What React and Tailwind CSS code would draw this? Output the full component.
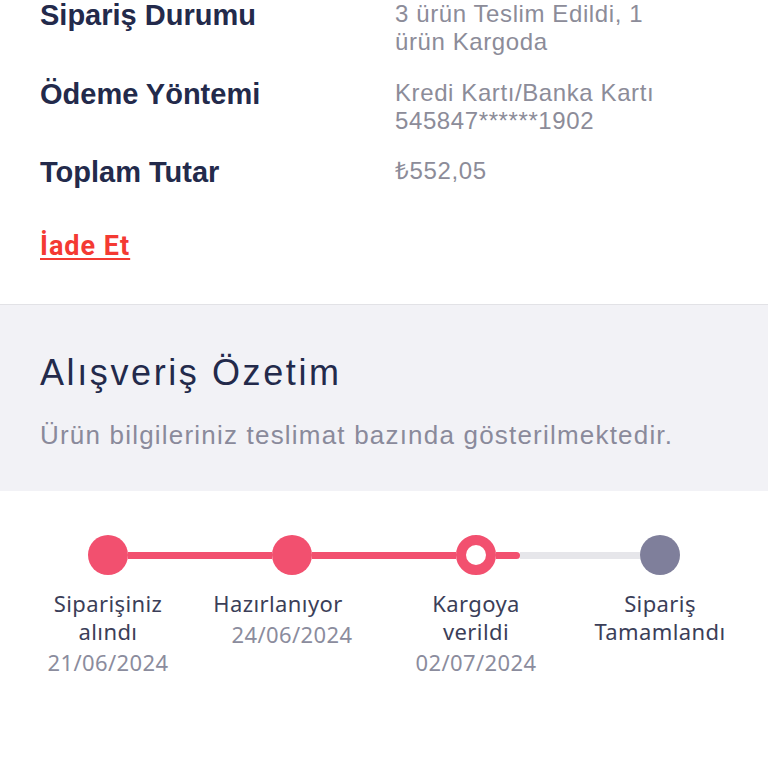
import React from "react";

const steps = [
  { lines: ["Siparişiniz", "alındı"], date: "21/06/2024", state: "done" },
  { lines: ["Hazırlanıyor"], date: "24/06/2024", state: "done", shift: true },
  { lines: ["Kargoya", "verildi"], date: "02/07/2024", state: "current" },
  { lines: ["Sipariş", "Tamamlandı"], date: null, state: "todo" },
];

const InfoRow = ({ label, children }) => (
  <div className="grid grid-cols-[355px_1fr] items-start">
    <div className="text-[29px] leading-[30px] font-bold text-[#232a4b]">{label}</div>
    <div className="text-[24px] leading-[28px] text-[#8c8c99] tracking-[0.6px]">{children}</div>
  </div>
);

const Step = ({ step, idx }) => {
  const leftColor = idx === 0 ? "bg-transparent" : idx === 3 ? "bg-[#e6e6ea]" : "bg-[#f2506f]";
  return (
    <div className="flex flex-col items-center">
      <div className="flex items-center w-full h-10">
        <div className={`flex-1 h-[7px] ${leftColor}`} />
        {step.state === "done" && <div className="w-10 h-10 rounded-full bg-[#f2506f] shrink-0" />}
        {step.state === "current" && (
          <div className="w-10 h-10 rounded-full border-[10px] border-[#f2506f] bg-white shrink-0" />
        )}
        {step.state === "todo" && <div className="w-10 h-10 rounded-full bg-[#7f7f9b] shrink-0" />}
        {idx === 2 ? (
          <div className="flex-1 flex h-[7px]">
            <div className="w-[24px] h-[7px] bg-[#f2506f] rounded-r-full" />
            <div className="flex-1 h-[7px] bg-[#e6e6ea]" />
          </div>
        ) : idx === 3 ? (
          <div className="flex-1 h-[7px]" />
        ) : (
          <div className="flex-1 h-[7px] bg-[#f2506f]" />
        )}
      </div>
      <div className="mt-[14px] flex flex-col items-center font-['Noto_Sans',sans-serif] text-[22px] leading-[28px] tracking-[0.4px] whitespace-nowrap">
        {step.lines.map((l) => (
          <div key={l} className={`text-[#3b3e58] ${step.shift ? "-ml-[28px]" : ""}`}>{l}</div>
        ))}
        {step.date && <div className="mt-[3px] text-[#8b8c9d]">{step.date}</div>}
      </div>
    </div>
  );
};

export default function App() {
  return (
    <div className="w-[768px] h-[768px] bg-white overflow-hidden font-['Liberation_Sans',Arial,sans-serif]">
      {/* sipariş bilgileri */}
      <div className="pl-10 pr-6 pb-[42px] flex flex-col border-b border-[#e2e2e6]">
        <InfoRow label="Sipariş Durumu">
          3 ürün Teslim Edildi, 1
          <br />
          ürün Kargoda
        </InfoRow>
        <div className="mt-[23px]">
          <InfoRow label="Ödeme Yöntemi">
            Kredi Kartı/Banka Kartı
            <br />
            545847******1902
          </InfoRow>
        </div>
        <div className="mt-[22px]">
          <InfoRow label="Toplam Tutar">₺552,05</InfoRow>
        </div>
        <div className="mt-[45px]">
          <span className="text-[27px] leading-[28px] font-bold text-[#f43a33] tracking-[1px] underline underline-offset-[3px] decoration-2 font-['Roboto',sans-serif]">
            İade Et
          </span>
        </div>
      </div>

      {/* alışveriş özeti */}
      <div className="bg-[#f2f2f6] pl-10 pt-[45px] h-[186px]">
        <div className="text-[36px] leading-[46px] text-[#232a4b] tracking-[2.6px]">Alışveriş Özetim</div>
        <div className="mt-[24px] text-[26px] leading-[30px] text-[#8a8a9b] tracking-[1.2px]">
          Ürün bilgileriniz teslimat bazında gösterilmektedir.
        </div>
      </div>

      {/* kargo takip */}
      <div className="pt-[44px] px-4 grid grid-cols-4">
        {steps.map((s, i) => (
          <Step key={i} step={s} idx={i} />
        ))}
      </div>
    </div>
  );
}
